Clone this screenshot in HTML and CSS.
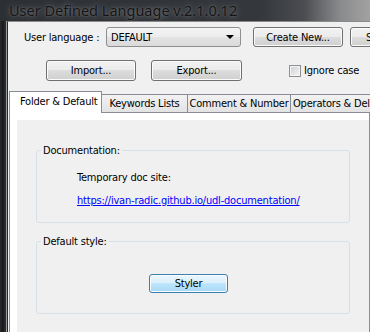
FILE: index.html
```html
<!DOCTYPE html>
<html lang="en">
<head>
    <meta charset="UTF-8">
    <meta name="viewport" content="width=device-width, initial-scale=1.0">
    <title>User Defined Language</title>
    <link rel="stylesheet" href="styles.css">
</head>
<body>
    <div class="window">
        <div class="titlebar">User Defined Language v.2.1.0.12</div>
        <div class="frame">
            <div class="frame-left"></div>
            <div class="client">
                <div class="toolbar">
                    <span class="label">User language :</span>
                    <div class="combo">
                        <span>DEFAULT</span>
                        <span class="arrow"></span>
                    </div>
                    <button class="btn btn-create">Create New...</button>
                    <button class="btn btn-save">Save As...</button>
                </div>
                <div class="toolbar toolbar-second">
                    <button class="btn btn-import">Import...</button>
                    <button class="btn btn-export">Export...</button>
                    <label class="check"><span class="box"></span>Ignore case</label>
                </div>
                <div class="tabs">
                    <div class="tab active">Folder &amp; Default</div>
                    <div class="tab tab-kw">Keywords Lists</div>
                    <div class="tab tab-cm">Comment &amp; Number</div>
                    <div class="tab tab-op">Operators &amp; Delimiter</div>
                </div>
                <div class="tab-page">
                    <div class="page-inner">
                        <fieldset class="group group-doc">
                            <legend>Documentation:</legend>
                            <p>Temporary doc site:</p>
                            <a href="#">https://ivan-radic.github.io/udl-documentation/</a>
                        </fieldset>
                        <fieldset class="group group-style">
                            <legend>Default style:</legend>
                            <button class="btn btn-styler">Styler</button>
                        </fieldset>
                    </div>
                </div>
            </div>
        </div>
    </div>
</body>
</html>
```

FILE: styles.css
```css
body {
    margin: 0;
    width: 370px;
    height: 332px;
    overflow: hidden;
    background: #202226;
    font-family: "DejaVu Sans Condensed", "DejaVu Sans", sans-serif;
    font-stretch: condensed;
    font-size: 11px;
    letter-spacing: -0.2px;
    color: #000;
}
.window {
    width: 370px;
    height: 332px;
    overflow: hidden;
}
.titlebar {
    height: 21px;
    line-height: 21px;
    padding-left: 9px;
    font-family: "Noto Sans", sans-serif;
    font-stretch: normal;
    font-size: 14.5px;
    letter-spacing: 0;
    color: #141414;
    white-space: nowrap;
    text-shadow: 0 0 7px rgba(255, 255, 255, 0.4), 0 0 2px rgba(255, 255, 255, 0.25);
    background: linear-gradient(to right, #2c2f34 0%, #34373c 70%, #4a4c50 82%, #8a8b8d 92%, #a2a2a2 100%);
}
.frame {
    display: flex;
    height: 311px;
}
.frame-left {
    width: 7px;
    flex-shrink: 0;
    background: linear-gradient(to right, #2a2c30 0px, #15171a 3px, #2b2d31 5px);
    box-shadow: inset -1px 0 0 #9a9a9a;
}
.client {
    flex: 1;
    background: #f0f0f0;
    border-left: 1px solid #2a2a2a;
    border-top: 1px solid #8a8a8a;
    overflow: hidden;
}
.toolbar {
    display: flex;
    align-items: center;
    height: 20px;
    margin-top: 5px;
    white-space: nowrap;
}
.toolbar > * {
    flex-shrink: 0;
}
.toolbar-second {
    height: 21px;
    margin-top: 13px;
}
.label {
    width: 82px;
    margin-left: 16px;
}
.combo {
    display: flex;
    align-items: center;
    justify-content: space-between;
    box-sizing: border-box;
    width: 135px;
    height: 20px;
    padding: 0 6px 0 4px;
    border: 1px solid #8e8f8f;
    border-radius: 3px;
    background: linear-gradient(#f4f4f4, #ececec 50%, #e3e3e3 50%, #dadada);
}
.arrow {
    width: 0;
    height: 0;
    border-left: 4px solid transparent;
    border-right: 4px solid transparent;
    border-top: 4px solid #000;
}
.btn {
    box-sizing: border-box;
    height: 20px;
    padding: 0;
    border: 1px solid #707070;
    border-radius: 3px;
    background: linear-gradient(#f2f2f2 0%, #ebebeb 50%, #dddddd 50%, #cfcfcf 100%);
    box-shadow: inset 0 0 0 1px #fbfbfb;
    font: inherit;
    letter-spacing: inherit;
    color: #000;
}
.btn-create {
    width: 90px;
    margin-left: 12px;
}
.btn-save {
    width: 90px;
    margin-left: 7px;
    padding-left: 15px;
    text-align: left;
}
.btn-import {
    width: 90px;
    height: 21px;
    margin-left: 38px;
}
.btn-export {
    width: 91px;
    height: 21px;
    margin-left: 15px;
}
.check {
    display: flex;
    align-items: center;
    margin-left: 47px;
}
.box {
    box-sizing: border-box;
    width: 12px;
    height: 12px;
    margin-right: 3px;
    border: 1px solid #8e8f8f;
    background: linear-gradient(135deg, #cbcfd5, #f6f6f6);
    box-shadow: inset 0 0 0 1px #f4f4f4;
}
.tabs {
    display: flex;
    align-items: flex-end;
    height: 21px;
    margin-top: 10px;
    margin-left: 1px;
    position: relative;
    z-index: 1;
    white-space: nowrap;
}
.tab {
    flex-shrink: 0;
    box-sizing: border-box;
    height: 18px;
    line-height: 17px;
    text-align: center;
    border-top: 1px solid #898c95;
    border-right: 1px solid #898c95;
    background: linear-gradient(#f2f2f2, #e3e3e3);
}
.tab.active {
    width: 93px;
    height: 22px;
    line-height: 19px;
    margin-bottom: -1px;
    padding-left: 10px;
    text-align: left;
    border-left: 1px solid #898c95;
    background: #fff;
}
.tab-kw {
    width: 86px;
}
.tab-cm {
    width: 103px;
}
.tab-op {
    width: 110px;
    text-align: left;
    padding-left: 2px;
}
.tab-page {
    margin-left: 1px;
    padding: 7px 0 0 7px;
    border: 1px solid #898c95;
    background: #fff;
}
.page-inner {
    height: 220px;
    padding: 24px 0 0 19px;
    background: #f0f0f0;
}
.group {
    box-sizing: border-box;
    width: 314px;
    margin: 0;
    padding: 0 0 15px 0;
    border: 1px solid #d5dfe5;
    border-radius: 3px;
}
.group legend {
    margin-left: 4px;
    padding: 0 2px;
    line-height: 13px;
}
.group p {
    margin: 14px 0 0 40px;
    line-height: 13px;
}
.group a {
    display: block;
    margin: 10px 0 0 40px;
    line-height: 13px;
    color: #0000ff;
}
.group-style {
    margin-top: 12px;
    padding-bottom: 20px;
}
.btn-styler {
    display: block;
    width: 79px;
    height: 19px;
    margin: 26px 0 0 112px;
    border-color: #3c7fb1;
    background: linear-gradient(#eaf6fd 0%, #d9f0fc 50%, #bee6fd 50%, #a7d9f5 100%);
}
```
